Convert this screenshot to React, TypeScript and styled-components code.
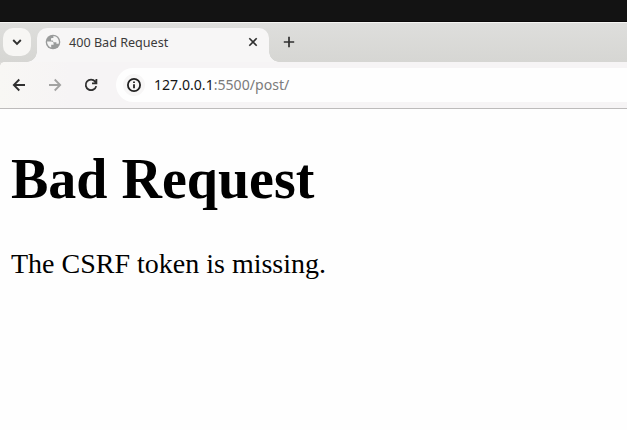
import React from "react";
import styled, { createGlobalStyle } from "styled-components";

const Global = createGlobalStyle`
  body { margin: 0; background: #fefefe; overflow: hidden; }
  * { box-sizing: border-box; }
`;

const Browser = styled.div`
  display: flex;
  flex-direction: column;
  width: 627px;
  height: 430px;
  overflow: hidden;
  font-family: "Noto Sans", sans-serif;
`;

const DesktopEdge = styled.div`
  height: 22px;
  flex: none;
  background: #131313;
  border-bottom: 1px solid #0b0909;
`;

const TabStrip = styled.div`
  display: flex;
  flex: none;
  height: 40px;
  padding: 5px 0 0 3px;
  border-top: 1px solid #f4f4f2;
  background: linear-gradient(#dededc, #d6d6d3);
`;

const TabSearch = styled.button`
  display: flex;
  align-items: center;
  justify-content: center;
  width: 28px;
  height: 28px;
  margin: 0 6px 0 0;
  padding: 0;
  border: 0;
  border-radius: 10px;
  background: #f7f6f4;
`;

const Tab = styled.div`
  position: relative;
  display: flex;
  align-items: center;
  width: 232px;
  height: 34px;
  padding: 0 9px 6px 8px;
  border-radius: 10px 10px 0 0;
  background: #f7f6f6;
  color: #3b3b3b;
  font-size: 12.6px;

  &::before,
  &::after {
    content: "";
    position: absolute;
    bottom: 0;
    width: 10px;
    height: 10px;
  }
  &::before {
    left: -10px;
    background: radial-gradient(circle at 0 0, transparent 9.5px, #f7f6f6 10px);
  }
  &::after {
    right: -10px;
    background: radial-gradient(circle at 100% 0, transparent 9.5px, #f7f6f6 10px);
  }
`;

const TabTitle = styled.span`
  flex: 1;
  margin-left: 8px;
  padding-top: 2px;
  line-height: 18px;
  white-space: nowrap;
`;

const NewTab = styled.div`
  display: flex;
  align-items: center;
  height: 28px;
  margin-left: 13px;
`;

const Toolbar = styled.div`
  display: flex;
  align-items: center;
  flex: none;
  height: 47px;
  padding: 0 0 1px 11px;
  border-bottom: 1px solid #bdbbbb;
  background:
    radial-gradient(circle at 4px 4px, transparent 3.5px, #dcdbd8 4px) 0 0 / 4px 4px no-repeat,
    linear-gradient(90deg, #f8f7f4, #f6f4f5 70px);
`;

const ToolIcon = styled.div`
  display: flex;
  width: 16px;
  height: 16px;
  margin-right: 20px;
`;

const AddressBar = styled.div`
  display: flex;
  align-items: center;
  flex: 1;
  height: 34px;
  margin-left: -3px;
  padding-left: 7px;
  border-radius: 17px 0 0 17px;
  background: #fefefe;
  font-size: 14.1px;
`;

const SiteInfo = styled.div`
  display: flex;
  align-items: center;
  justify-content: center;
  width: 22px;
  height: 22px;
  margin-right: 9px;
  border-radius: 50%;
  background: #f7f6f6;
`;

const Host = styled.span`
  color: #161616;
`;

const Path = styled.span`
  color: #7b7b7b;
`;

const Page = styled.main`
  flex: 1;
  padding-left: 11px;
  background: #fefefe;
  color: #000;
  font-family: "Liberation Serif", serif;
  font-size: 28px;
`;

const Heading = styled.h1`
  margin: 38px 0 0;
  font-size: 56px;
  line-height: 64px;
`;

const Message = styled.p`
  margin: 37px 0 0;
  line-height: 32px;
`;

const Stroke = styled.svg<{ $color?: string; $weight?: number }>`
  display: block;
  flex: none;
  fill: none;
  stroke: ${(p) => p.$color ?? "#303030"};
  stroke-width: ${(p) => p.$weight ?? 1.8};
`;

const Globe = () => (
  <svg width="16" height="16" viewBox="0 0 16 16">
    <circle cx="8" cy="8" r="7.3" fill="#999b9b" />
    <path
      d="M2 7.6H6.2C7.9 7.6 8.6 8.5 8.6 9.8V10.7H6.2V13.6C3.7 12.8 2 10.5 2 7.6ZM8.4 2.1C11.4 2.2 13.9 4.8 13.9 8C13.9 8.6 13.8 9.2 13.6 9.7H11.4V8.2H9.6C8.5 8.2 7.8 7.5 7.8 6.4H6V4.9C6 4.3 6.5 3.9 7.1 3.9H8.4Z"
      fill="#f5f5f5"
    />
  </svg>
);

export default function App() {
  return (
    <Browser>
      <Global />
      <DesktopEdge />
      <TabStrip>
        <TabSearch aria-label="Search tabs">
          <Stroke width="10" height="8" viewBox="0 0 10 8" $weight={1.9}>
            <path d="M1.2 2L5 5.8L8.8 2" />
          </Stroke>
        </TabSearch>
        <Tab>
          <Globe />
          <TabTitle>400 Bad Request</TabTitle>
          <Stroke width="14" height="14" viewBox="0 0 14 14" $weight={1.6}>
            <path d="M3.3 3.3L10.7 10.7M10.7 3.3L3.3 10.7" />
          </Stroke>
        </Tab>
        <NewTab>
          <Stroke width="14" height="14" viewBox="0 0 14 14" $weight={1.7}>
            <path d="M7 1.8V12.2M1.8 7H12.2" />
          </Stroke>
        </NewTab>
      </TabStrip>
      <Toolbar>
        <ToolIcon>
          <Stroke width="16" height="16" viewBox="0 0 16 16">
            <path d="M14 8H3M8.3 2.5L2.8 8L8.3 13.5" />
          </Stroke>
        </ToolIcon>
        <ToolIcon>
          <Stroke width="16" height="16" viewBox="0 0 16 16" $color="#a3a3a2">
            <path d="M2 8H13M7.7 2.5L13.2 8L7.7 13.5" />
          </Stroke>
        </ToolIcon>
        <ToolIcon>
          <Stroke width="16" height="16" viewBox="0 0 16 16">
            <path d="M13.2 9.1A5.3 5.3 0 1 1 12.2 4.6L13.4 6.2M13.4 2V6.4H9" />
          </Stroke>
        </ToolIcon>
        <AddressBar>
          <SiteInfo>
            <Stroke width="16" height="16" viewBox="0 0 16 16" $color="#202020">
              <circle cx="8" cy="8" r="6.1" />
              <path d="M8 7.2V11.2M8 4.6V6" />
            </Stroke>
          </SiteInfo>
          <Host>127.0.0.1</Host>
          <Path>:5500/post/</Path>
        </AddressBar>
      </Toolbar>
      <Page>
        <Heading>Bad Request</Heading>
        <Message>The CSRF token is missing.</Message>
      </Page>
    </Browser>
  );
}
